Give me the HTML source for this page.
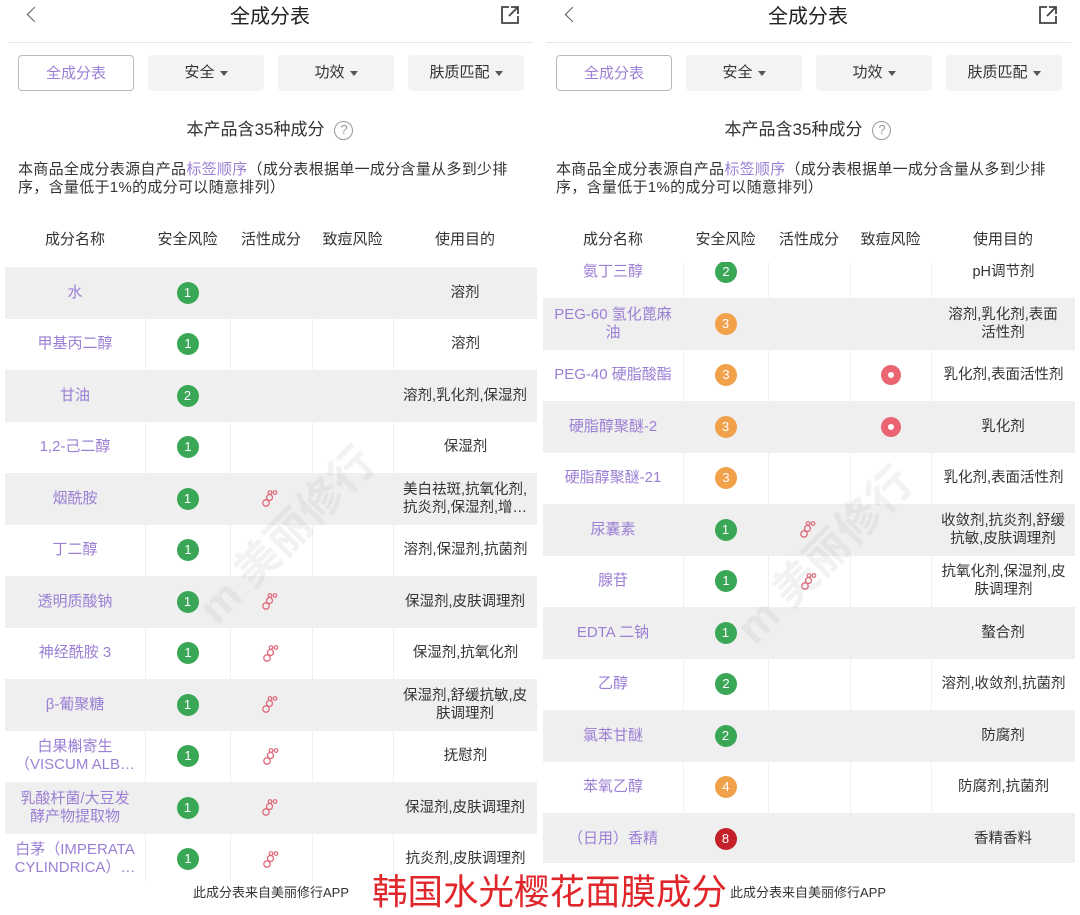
<!DOCTYPE html>
<html><head><meta charset="utf-8"><style>
*{margin:0;padding:0;box-sizing:border-box}
body{width:1080px;height:910px;background:#fff;font-family:"Liberation Sans","Noto Sans CJK SC",sans-serif;color:#333;position:relative;overflow:hidden}
.p{position:absolute;top:0;width:540px;height:910px}
.title{position:absolute;top:0;left:0;width:540px;text-align:center;font-size:20px;color:#222}
.back{position:absolute;left:29px;top:9px;width:11px;height:11px;border-left:1.6px solid #555;border-bottom:1.6px solid #555;transform:rotate(45deg)}
.share{position:absolute;left:500px;top:5px}
.hr{position:absolute;top:42px;left:8px;width:525px;height:1px;background:#e6e6e6}
.tab{position:absolute;top:55px;width:116px;height:36px;border-radius:4px;background:#f3f3f3;font-size:15px;text-align:center;line-height:36px;color:#333}
.tab.a{background:#fff;border:1px solid #bbb;color:#9b7fd4}
.tri{display:inline-block;width:0;height:0;border-left:4px solid transparent;border-right:4px solid transparent;border-top:5px solid #555;margin-left:5px;vertical-align:middle}
.cnt{position:absolute;top:115px;left:0;width:540px;text-align:center;font-size:17px;color:#333}
.q{display:inline-block;width:19px;height:19px;border:1.5px solid #999;border-radius:50%;font-size:13px;line-height:16px;color:#999;margin-left:10px;vertical-align:1px}
.desc{position:absolute;top:161px;left:18px;width:514px;font-size:15px;line-height:18px;color:#333;letter-spacing:0.3px}
.desc span{color:#9b7fd4}
.hd{position:absolute;top:228px;height:20px;font-size:15px;color:#333;text-align:center}
.tbl{position:absolute;left:5px;width:532px;overflow:hidden}
.r{height:51.5px;display:flex;align-items:center;position:relative}
.r.g{background:#efefef}
.r>div{height:100%;display:flex;align-items:center;justify-content:center;text-align:center}
.r:not(.g)>div+div{border-left:1px solid #f0f0f0}
.c1{width:140px;color:#9b7fd4;font-size:15px;line-height:18px;padding:0 4px}
.c2{width:85px}.c3{width:82px}.c4{width:81px}
.c5{width:144px;font-size:14.5px;line-height:18px;color:#333;padding:0 2px}
.b{width:22px;height:22px;border-radius:50%;color:#fff;font-size:13px;line-height:22px;text-align:center}
.g1{background:#3aa757}.o{background:#f0a14a}.rd{background:#c4202a}
.ac{width:20px;height:20px;border-radius:50%;background:#ea6571;position:relative}
.ac:after{content:"";position:absolute;left:7px;top:7px;width:6px;height:6px;border-radius:50%;background:#fff}
.foot{position:absolute;top:882px;font-size:13px;color:#333}
.big{position:absolute;left:372px;top:864px;font-size:35.5px;color:#e0262a}
.wm{position:absolute;font-size:44px;color:rgba(150,150,150,.12);transform:rotate(-45deg);font-weight:bold;white-space:nowrap}
</style></head><body>

<svg width="0" height="0" style="position:absolute"><defs><g id="mol"><circle cx="4" cy="13" r="3.2" fill="none" stroke="#e0697a" stroke-width="1.3"/><circle cx="7.5" cy="7.5" r="3" fill="none" stroke="#e0697a" stroke-width="1.3"/><circle cx="8" cy="2.5" r="1.8" fill="none" stroke="#e0697a" stroke-width="1.2"/><circle cx="13" cy="2.5" r="1.8" fill="none" stroke="#e0697a" stroke-width="1.2"/></g></defs></svg>

<!-- LEFT -->
<div class="p" style="left:0">
<div class="back"></div><div class="title">全成分表</div>
<svg class="share" width="20" height="20" viewBox="0 0 20 20"><path d="M9 2H2v16h16v-7" fill="none" stroke="#444" stroke-width="1.8"/><path d="M11 2h7v7M18 2L9 11" fill="none" stroke="#444" stroke-width="1.8"/></svg>
<div class="hr"></div>
<div class="tab a" style="left:18px">全成分表</div>
<div class="tab" style="left:148px">安全<span class="tri"></span></div>
<div class="tab" style="left:278px">功效<span class="tri"></span></div>
<div class="tab" style="left:408px">肤质匹配<span class="tri"></span></div>
<div class="cnt">本产品含35种成分<span class="q">?</span></div>
<div class="desc">本商品全成分表源自产品<span>标签顺序</span>（成分表根据单一成分含量从多到少排<br>序，含量低于1%的成分可以随意排列）</div>
<div class="hd" style="left:5px;width:140px">成分名称</div>
<div class="hd" style="left:145px;width:85px">安全风险</div>
<div class="hd" style="left:230px;width:82px">活性成分</div>
<div class="hd" style="left:312px;width:81px">致痘风险</div>
<div class="hd" style="left:393px;width:144px">使用目的</div>
<div class="tbl" style="top:267px;height:614px">
<div class="r g"><div class="c1">水</div><div class="c2"><div class="b g1">1</div></div><div class="c3"></div><div class="c4"></div><div class="c5">溶剂</div></div>
<div class="r"><div class="c1">甲基丙二醇</div><div class="c2"><div class="b g1">1</div></div><div class="c3"></div><div class="c4"></div><div class="c5">溶剂</div></div>
<div class="r g"><div class="c1">甘油</div><div class="c2"><div class="b g1">2</div></div><div class="c3"></div><div class="c4"></div><div class="c5">溶剂,乳化剂,保湿剂</div></div>
<div class="r"><div class="c1">1,2-己二醇</div><div class="c2"><div class="b g1">1</div></div><div class="c3"></div><div class="c4"></div><div class="c5">保湿剂</div></div>
<div class="r g"><div class="c1">烟酰胺</div><div class="c2"><div class="b g1">1</div></div><div class="c3"><svg width="18" height="17"><use href="#mol"/></svg></div><div class="c4"></div><div class="c5">美白祛斑,抗氧化剂,<br>抗炎剂,保湿剂,增…</div></div>
<div class="r"><div class="c1">丁二醇</div><div class="c2"><div class="b g1">1</div></div><div class="c3"></div><div class="c4"></div><div class="c5">溶剂,保湿剂,抗菌剂</div></div>
<div class="r g"><div class="c1">透明质酸钠</div><div class="c2"><div class="b g1">1</div></div><div class="c3"><svg width="18" height="17"><use href="#mol"/></svg></div><div class="c4"></div><div class="c5">保湿剂,皮肤调理剂</div></div>
<div class="r"><div class="c1">神经酰胺 3</div><div class="c2"><div class="b g1">1</div></div><div class="c3"><svg width="18" height="17"><use href="#mol"/></svg></div><div class="c4"></div><div class="c5">保湿剂,抗氧化剂</div></div>
<div class="r g"><div class="c1">β-葡聚糖</div><div class="c2"><div class="b g1">1</div></div><div class="c3"><svg width="18" height="17"><use href="#mol"/></svg></div><div class="c4"></div><div class="c5">保湿剂,舒缓抗敏,皮<br>肤调理剂</div></div>
<div class="r"><div class="c1">白果槲寄生<br>（VISCUM ALB…</div><div class="c2"><div class="b g1">1</div></div><div class="c3"><svg width="18" height="17"><use href="#mol"/></svg></div><div class="c4"></div><div class="c5">抚慰剂</div></div>
<div class="r g"><div class="c1">乳酸杆菌/大豆发<br>酵产物提取物</div><div class="c2"><div class="b g1">1</div></div><div class="c3"><svg width="18" height="17"><use href="#mol"/></svg></div><div class="c4"></div><div class="c5">保湿剂,皮肤调理剂</div></div>
<div class="r"><div class="c1">白茅（IMPERATA<br>CYLINDRICA）…</div><div class="c2"><div class="b g1">1</div></div><div class="c3"><svg width="18" height="17"><use href="#mol"/></svg></div><div class="c4"></div><div class="c5">抗炎剂,皮肤调理剂</div></div>
</div>
<div class="wm" style="left:170px;top:500px">m 美丽修行</div>
</div>

<!-- RIGHT -->
<div class="p" style="left:538px">
<div class="back"></div><div class="title">全成分表</div>
<svg class="share" width="20" height="20" viewBox="0 0 20 20"><path d="M9 2H2v16h16v-7" fill="none" stroke="#444" stroke-width="1.8"/><path d="M11 2h7v7M18 2L9 11" fill="none" stroke="#444" stroke-width="1.8"/></svg>
<div class="hr"></div>
<div class="tab a" style="left:18px">全成分表</div>
<div class="tab" style="left:148px">安全<span class="tri"></span></div>
<div class="tab" style="left:278px">功效<span class="tri"></span></div>
<div class="tab" style="left:408px">肤质匹配<span class="tri"></span></div>
<div class="cnt">本产品含35种成分<span class="q">?</span></div>
<div class="desc">本商品全成分表源自产品<span>标签顺序</span>（成分表根据单一成分含量从多到少排<br>序，含量低于1%的成分可以随意排列）</div>
<div class="hd" style="left:5px;width:140px">成分名称</div>
<div class="hd" style="left:145px;width:85px">安全风险</div>
<div class="hd" style="left:230px;width:82px">活性成分</div>
<div class="hd" style="left:312px;width:81px">致痘风险</div>
<div class="hd" style="left:393px;width:144px">使用目的</div>
<div class="tbl" style="top:262px;height:601px">
<div style="margin-top:-15.5px">
<div class="r"><div class="c1">氨丁三醇</div><div class="c2"><div class="b g1">2</div></div><div class="c3"></div><div class="c4"></div><div class="c5">pH调节剂</div></div>
<div class="r g"><div class="c1">PEG-60 氢化蓖麻<br>油</div><div class="c2"><div class="b o">3</div></div><div class="c3"></div><div class="c4"></div><div class="c5">溶剂,乳化剂,表面<br>活性剂</div></div>
<div class="r"><div class="c1">PEG-40 硬脂酸酯</div><div class="c2"><div class="b o">3</div></div><div class="c3"></div><div class="c4"><div class="ac"></div></div><div class="c5">乳化剂,表面活性剂</div></div>
<div class="r g"><div class="c1">硬脂醇聚醚-2</div><div class="c2"><div class="b o">3</div></div><div class="c3"></div><div class="c4"><div class="ac"></div></div><div class="c5">乳化剂</div></div>
<div class="r"><div class="c1">硬脂醇聚醚-21</div><div class="c2"><div class="b o">3</div></div><div class="c3"></div><div class="c4"></div><div class="c5">乳化剂,表面活性剂</div></div>
<div class="r g"><div class="c1">尿囊素</div><div class="c2"><div class="b g1">1</div></div><div class="c3"><svg width="18" height="17"><use href="#mol"/></svg></div><div class="c4"></div><div class="c5">收敛剂,抗炎剂,舒缓<br>抗敏,皮肤调理剂</div></div>
<div class="r"><div class="c1">腺苷</div><div class="c2"><div class="b g1">1</div></div><div class="c3"><svg width="18" height="17"><use href="#mol"/></svg></div><div class="c4"></div><div class="c5">抗氧化剂,保湿剂,皮<br>肤调理剂</div></div>
<div class="r g"><div class="c1">EDTA 二钠</div><div class="c2"><div class="b g1">1</div></div><div class="c3"></div><div class="c4"></div><div class="c5">螯合剂</div></div>
<div class="r"><div class="c1">乙醇</div><div class="c2"><div class="b g1">2</div></div><div class="c3"></div><div class="c4"></div><div class="c5">溶剂,收敛剂,抗菌剂</div></div>
<div class="r g"><div class="c1">氯苯甘醚</div><div class="c2"><div class="b g1">2</div></div><div class="c3"></div><div class="c4"></div><div class="c5">防腐剂</div></div>
<div class="r"><div class="c1">苯氧乙醇</div><div class="c2"><div class="b o">4</div></div><div class="c3"></div><div class="c4"></div><div class="c5">防腐剂,抗菌剂</div></div>
<div class="r g"><div class="c1">（日用）香精</div><div class="c2"><div class="b rd">8</div></div><div class="c3"></div><div class="c4"></div><div class="c5">香精香料</div></div>
</div></div>
<div class="wm" style="left:170px;top:520px">m 美丽修行</div>
</div>

<div class="foot" style="left:193px">此成分表来自美丽修行APP</div>
<div class="foot" style="left:730px">此成分表来自美丽修行APP</div>
<div class="big">韩国水光樱花面膜成分</div>
</body></html>
